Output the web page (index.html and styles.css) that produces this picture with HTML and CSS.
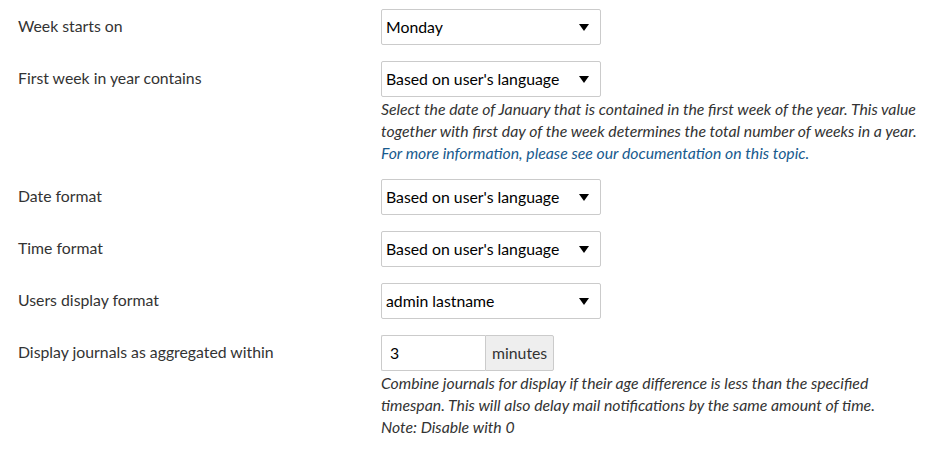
FILE: index.html
```html
<!DOCTYPE html>
<html lang="en">
<head>
<meta charset="utf-8">
<title>Settings</title>
<link rel="stylesheet" href="styles.css">
</head>
<body>
<div class="form">
  <div class="row">
    <div class="label">Week starts on</div>
    <div class="field">
      <div class="select"><span>Monday</span><span class="arrow"></span></div>
    </div>
  </div>
  <div class="row">
    <div class="label">First week in year contains</div>
    <div class="field">
      <div class="select"><span>Based on user's language</span><span class="arrow"></span></div>
      <div class="help">Select the date of January that is contained in the first week of the year. This value together with first day of the week determines the total number of weeks in a year. <a href="#">For more information, please see our documentation on this topic.</a></div>
    </div>
  </div>
  <div class="row">
    <div class="label">Date format</div>
    <div class="field">
      <div class="select"><span>Based on user's language</span><span class="arrow"></span></div>
    </div>
  </div>
  <div class="row">
    <div class="label">Time format</div>
    <div class="field">
      <div class="select"><span>Based on user's language</span><span class="arrow"></span></div>
    </div>
  </div>
  <div class="row">
    <div class="label">Users display format</div>
    <div class="field">
      <div class="select"><span>admin lastname</span><span class="arrow"></span></div>
    </div>
  </div>
  <div class="row">
    <div class="label">Display journals as aggregated within</div>
    <div class="field">
      <div class="input-group"><div class="input">3</div><div class="addon">minutes</div></div>
      <div class="help">Combine journals for display if their age difference is less than the specified timespan. This will also delay mail notifications by the same amount of time.<br>Note: Disable with 0</div>
    </div>
  </div>
</div>
</body>
</html>
```
FILE: styles.css
```css
html, body {
  margin: 0;
  padding: 0;
  background: #fff;
}
body {
  font-family: Lato, "Open Sans", sans-serif;
  font-size: 15.8px;
  color: #333;
}
.form {
  padding: 9px 18px 0 18px;
  display: flex;
  flex-direction: column;
  gap: 16px;
}
.row {
  display: grid;
  grid-template-columns: 363px 550px;
}
.label {
  line-height: 34px;
  color: #333;
}
.select {
  box-sizing: border-box;
  width: 220px;
  height: 36px;
  border: 1px solid #cbcbcb;
  border-radius: 2px;
  display: flex;
  align-items: center;
  justify-content: space-between;
  padding: 0 11px 2px 4px;
  color: #000;
  background: #fff;
}
.arrow {
  width: 0;
  height: 0;
  margin-top: 2px;
  border-left: 5px solid transparent;
  border-right: 5px solid transparent;
  border-top: 7px solid #000;
}
.help {
  font-style: italic;
  line-height: 22px;
  margin-top: 1px;
  margin-bottom: -1px;
  color: #333;
}
.help a {
  color: #175a8e;
  text-decoration: none;
}
.input-group {
  display: flex;
  height: 36px;
}
.input {
  box-sizing: border-box;
  width: 104px;
  height: 36px;
  border: 1px solid #cbcbcb;
  border-right: none;
  border-radius: 2px 0 0 2px;
  line-height: 33px;
  padding-left: 8px;
  color: #000;
}
.addon {
  box-sizing: border-box;
  height: 36px;
  border: 1px solid #cbcbcb;
  border-radius: 0 2px 2px 0;
  background: #eee;
  line-height: 33px;
  padding: 0 6px;
  color: #333;
}
```
